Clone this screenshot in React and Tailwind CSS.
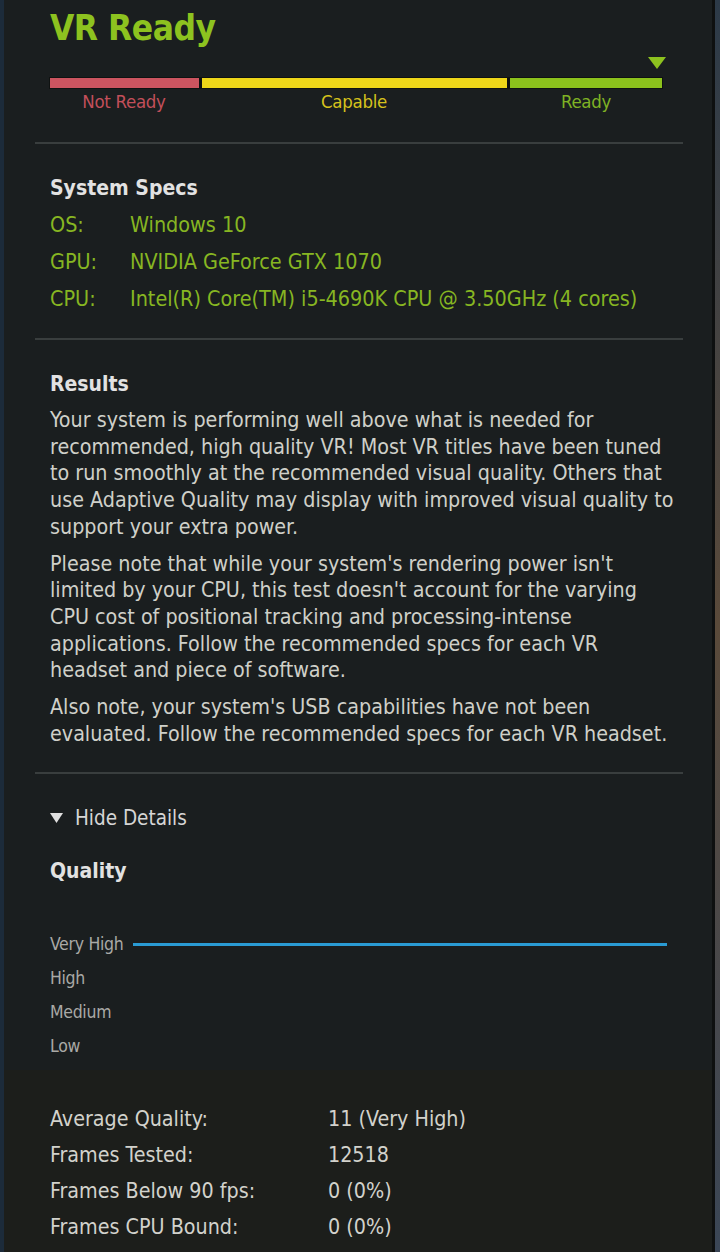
import React from "react";

const font = { fontFamily: '"DejaVu Sans Condensed", "Liberation Sans", sans-serif' };

function Sep({ className = "" }) {
  return <div className={"ml-[35px] w-[648px] h-[2px] bg-[#393e3e] " + className} />;
}

export default function App() {
  const specs = [
    ["OS:", "Windows 10"],
    ["GPU:", "NVIDIA GeForce GTX 1070"],
    ["CPU:", "Intel(R) Core(TM) i5-4690K CPU @ 3.50GHz (4 cores)"],
  ];
  const stats = [
    ["Average Quality:", "11 (Very High)"],
    ["Frames Tested:", "12518"],
    ["Frames Below 90 fps:", "0 (0%)"],
    ["Frames CPU Bound:", "0 (0%)"],
  ];
  return (
    <div className="w-[720px] h-[1252px] flex bg-[#1a1e1f] overflow-hidden" style={font}>
      <div className="flex-1 flex flex-col shadow-[inset_4px_0_0_#1c2b3a]">
        <div>
          {/* Title */}
          <div className="pt-[8px] pl-[50px]">
            <div className="h-[40px] leading-[40px] text-[35px] font-bold text-[#8dc21f] tracking-[-0.5px]">VR Ready</div>
          </div>
          {/* marker */}
          <div className="mt-[9px] pl-[648px] h-[12px]">
            <svg width="18" height="12" viewBox="0 0 18 12" className="block"><polygon points="0,0 18,0 9,12" fill="#8dc21f" /></svg>
          </div>
          {/* bar */}
          <div className="mt-[8px] ml-[49px] w-[614px] h-[12px] flex gap-[3px] bg-[#0f1211] p-[1px]">
            <div className="w-[149px] h-full bg-[#cc5560]" />
            <div className="w-[305px] h-full bg-[#eed619]" />
            <div className="flex-1 h-full bg-[#8cc21c]" />
          </div>
          <div className="mt-[3px] ml-[50px] w-[612px] flex h-[20px] leading-[20px] text-[18.5px] tracking-[-0.3px]">
            <div className="w-[148px] text-center text-[#c24f5a]">Not Ready</div>
            <div className="w-[312px] text-center text-[#d6c21c]">Capable</div>
            <div className="flex-1 text-center text-[#7fb224]">Ready</div>
          </div>
          <Sep className="mt-[30px]" />

          {/* System specs */}
          <div className="pl-[50px] mt-[31px] h-[26px] leading-[26px] text-[21px] font-bold text-[#e2e2e2]">System Specs</div>
          <div className="pl-[50px] mt-[5px] flex flex-col text-[21.4px] text-[#87b622]">
            {specs.map(([k, v]) => (
              <div key={k} className="h-[37px] leading-[37px] flex">
                <div className="w-[80px]">{k}</div>
                <div>{v}</div>
              </div>
            ))}
          </div>
          <Sep className="mt-[21px]" />

          {/* Results */}
          <div className="pl-[50px] mt-[31px] h-[26px] leading-[26px] text-[21px] font-bold text-[#e2e2e2]">Results</div>
          <div className="pl-[50px] mt-[10px] text-[21.3px] leading-[26.7px] text-[#cfd0c9] whitespace-nowrap flex flex-col gap-[10px]">
            <p>
              Your system is performing well above what is needed for<br />
              recommended, high quality VR! Most VR titles have been tuned<br />
              to run smoothly at the recommended visual quality. Others that<br />
              use Adaptive Quality may display with improved visual quality to<br />
              support your extra power.
            </p>
            <p>
              Please note that while your system's rendering power isn't<br />
              limited by your CPU, this test doesn't account for the varying<br />
              CPU cost of positional tracking and processing-intense<br />
              applications. Follow the recommended specs for each VR<br />
              headset and piece of software.
            </p>
            <p>
              Also note, your system's USB capabilities have not been<br />
              evaluated. Follow the recommended specs for each VR headset.
            </p>
          </div>
          <Sep className="mt-[25px]" />

          {/* Hide details */}
          <div className="pl-[50px] mt-[32px] h-[24px] leading-[24px] text-[20.5px] text-[#d6d6d6] flex items-center gap-[12px]">
            <svg width="13" height="10" viewBox="0 0 13 10" className="block"><polygon points="0,0 13,0 6.5,10" fill="#e0e0e0" /></svg>
            <span>Hide Details</span>
          </div>
          <div className="pl-[50px] mt-[28px] h-[26px] leading-[26px] text-[21px] font-bold text-[#e2e2e2]">Quality</div>

          {/* chart */}
          <div className="pl-[50px] mt-[43px] flex flex-col text-[17.5px] tracking-[-0.3px] text-[#a9a9a6]">
            <div className="h-[34px] flex items-center">
              <span className="w-[83px]">Very High</span>
              <div className="w-[534px] h-[3px] bg-[#2a9bd4]" />
            </div>
            <div className="h-[34px] flex items-center">High</div>
            <div className="h-[34px] flex items-center">Medium</div>
            <div className="h-[34px] flex items-center">Low</div>
          </div>
        </div>

        {/* Stats */}
        <div className="mt-[7px] flex-1 bg-[#1c1e1b] shadow-[inset_4px_0_0_#1c2b3a] pl-[50px] pt-[31px] text-[21.3px] text-[#d2d2cc]">
          {stats.map(([k, v]) => (
            <div key={k} className="h-[36px] leading-[36px] flex">
              <div className="w-[278px]">{k}</div>
              <div>{v}</div>
            </div>
          ))}
        </div>
      </div>
      <div className="w-[3px] h-full bg-[#0e1010]" />
      <div className="w-[5px] h-full bg-gradient-to-b from-[#2c3a48] via-[#5a4a3a] to-[#3a4656]" />
    </div>
  );
}
